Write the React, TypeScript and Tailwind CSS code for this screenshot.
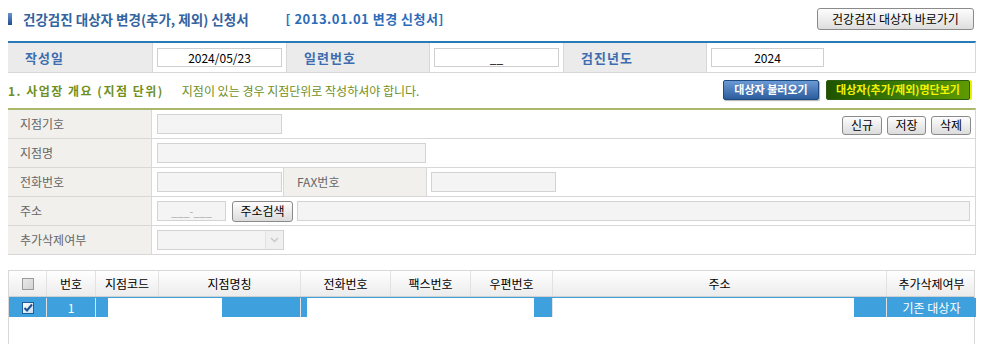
const font = { fontFamily: '"Noto Sans CJK KR", "Noto Sans", sans-serif' };

const GrayBtn = ({ children, className = "" }: { children: React.ReactNode; className?: string }) => (
  <button
    className={`h-[19px] rounded-[3px] border border-[#8a8a8a] bg-gradient-to-b from-[#fdfdfd] to-[#dcdcdc] px-[6px] text-[12px] leading-none text-black ${className}`}
  >
    {children}
  </button>
);

const TopLabel = ({ children }: { children: React.ReactNode }) => (
  <div className="flex items-center bg-[#ebebeb] pl-[17px] text-[13px] font-bold tracking-[1px] text-[#3e6cb0]">
    {children}
  </div>
);

const TopInput = ({ value, w }: { value: string; w: string }) => (
  <div className="flex items-center border-l border-[#d8d8d8] px-[4px]">
    <div className={`${w} flex h-[19px] items-center justify-center border border-[#cfcfcf] bg-white text-[12px] text-black`}>
      {value}
    </div>
  </div>
);

const FormLabel = ({ children }: { children: React.ReactNode }) => (
  <div className="flex w-[144px] shrink-0 items-center border-r border-[#d8d8d8] bg-[#f1f0ec] pl-[12px] text-[12px] text-[#666]">
    {children}
  </div>
);

const Field = ({ w, children }: { w: string; children?: React.ReactNode }) => (
  <div className={`${w} h-[20px] shrink-0 border border-[#d3d3d3] bg-[#f4f4f4] text-[12px] text-[#999]`}>{children}</div>
);

const cols = ["w-[38px]", "w-[49px]", "w-[63px]", "w-[142px]", "w-[90px]", "w-[80px]", "w-[82px]", "w-[334px]", "w-[89px]"];
const heads = ["", "번호", "지점코드", "지점명칭", "전화번호", "팩스번호", "우편번호", "주소", "추가삭제여부"];

export default function App() {
  return (
    <div className="h-[344px] w-[983px] overflow-hidden bg-white pl-[8px] pr-[7px] pt-[8px]" style={font}>
      {/* title */}
      <div className="flex h-[22px] items-center justify-between">
        <div className="flex items-center">
          <div className="h-[12px] w-[4px] bg-gradient-to-b from-[#6b93c9] to-[#1e4f91]" />
          <span className="ml-[11px] text-[13.5px] font-bold text-[#3563a0]">건강검진 대상자 변경(추가, 제외) 신청서</span>
          <span className="ml-[37px] text-[13px] font-bold tracking-[0.5px] text-[#2b6cb8]">[ 2013.01.01 변경 신청서]</span>
        </div>
        <button className="mr-[2px] h-[22px] w-[157px] rounded-[3px] border border-[#8a8a8a] bg-gradient-to-b from-[#fdfdfd] to-[#dedede] text-[12px] text-black">
          건강검진 대상자 바로가기
        </button>
      </div>

      {/* info row */}
      <div className="mt-[11px] grid h-[32px] w-[968px] grid-cols-[144px_134px_143px_134px_143px_1fr] border-b border-r border-[#d8d8d8] border-t-[2px] border-t-[#2a7ab8]">
        <TopLabel>작성일</TopLabel>
        <TopInput value="2024/05/23" w="w-[125px]" />
        <div className="flex border-l border-[#d8d8d8]"><div className="flex-1"><TopLabelFill>일련번호</TopLabelFill></div></div>
        <TopInput value="__" w="w-[125px]" />
        <div className="flex border-l border-[#d8d8d8]"><div className="flex-1"><TopLabelFill>검진년도</TopLabelFill></div></div>
        <TopInput value="2024" w="w-[113px]" />
      </div>

      {/* section header */}
      <div className="flex h-[35px] items-center justify-between">
        <div className="flex items-center pt-[1px]">
          <span className="text-[12px] font-bold tracking-[1.5px] text-[#6f8f1e]">1. 사업장 개요 (지점 단위)</span>
          <span className="ml-[18px] text-[12px] text-[#6f8f1e]">지점이 있는 경우 지점단위로 작성하셔야 합니다.</span>
        </div>
        <div className="flex items-center gap-[7px] pb-[2px] pr-[6px]">
          <button className="h-[20px] w-[96px] rounded-[2px] border border-[#1d4a80] bg-gradient-to-b from-[#6c9ad4] to-[#2b5c9c] text-[11px] font-bold text-white shadow-[1px_1px_1px_rgba(0,0,0,0.3)]">
            대상자 불러오기
          </button>
          <button className="h-[20px] w-[144px] rounded-[2px] border border-[#2d5c10] bg-gradient-to-r from-[#1f5200] via-[#3a7a08] to-[#5f9a00] text-[11px] font-bold text-[#f4f400] shadow-[2px_0_0_#e8f000]">
            대상자(추가/제외)명단보기
          </button>
        </div>
      </div>

      {/* form table */}
      <div className="w-[968px] border-b border-r border-[#d8d8d8] border-t-[2px] border-t-[#a9b86a]">
        <div className="flex h-[29px] border-b border-[#d8d8d8]">
          <FormLabel>지점기호</FormLabel>
          <div className="flex flex-1 items-center justify-between pl-[5px] pr-[4px]">
            <Field w="w-[125px]" />
            <div className="flex gap-[5px] pt-[2px]">
              <GrayBtn className="w-[40px]">신규</GrayBtn>
              <GrayBtn className="w-[39px]">저장</GrayBtn>
              <GrayBtn className="w-[40px]">삭제</GrayBtn>
            </div>
          </div>
        </div>
        <div className="flex h-[29px] border-b border-[#d8d8d8]">
          <FormLabel>지점명</FormLabel>
          <div className="flex flex-1 items-center pl-[5px]">
            <Field w="w-[269px]" />
          </div>
        </div>
        <div className="flex h-[29px] border-b border-[#d8d8d8]">
          <FormLabel>전화번호</FormLabel>
          <div className="flex w-[132px] items-center border-r border-[#d8d8d8] pl-[5px]">
            <Field w="w-[125px]" />
          </div>
          <div className="flex w-[143px] items-center border-r border-[#d8d8d8] bg-[#f1f0ec] pl-[13px] text-[12px] text-[#666]">FAX번호</div>
          <div className="flex flex-1 items-center pl-[4px]">
            <Field w="w-[125px]" />
          </div>
        </div>
        <div className="flex h-[29px] border-b border-[#d8d8d8]">
          <FormLabel>주소</FormLabel>
          <div className="flex flex-1 items-center pl-[5px] pr-[5px]">
            <Field w="w-[69px]">
              <div className="flex h-full items-center justify-center text-[11px] text-[#aaa]">___-___</div>
            </Field>
            <GrayBtn className="ml-[6px] h-[21px] w-[61px] px-0 text-[12px]">주소검색</GrayBtn>
            <div className="ml-[4px] h-[20px] flex-1 border border-[#d3d3d3] bg-[#f4f4f4]" />
          </div>
        </div>
        <div className="flex h-[28px]">
          <FormLabel>추가삭제여부</FormLabel>
          <div className="flex flex-1 items-center pl-[5px]">
            <div className="flex h-[20px] w-[127px] border border-[#d3d3d3] bg-[#f4f4f4]">
              <div className="flex-1" />
              <div className="flex w-[18px] items-center justify-center border-l border-[#e2e2e2] bg-[#f0f0f0]">
                <svg width="9" height="6" viewBox="0 0 9 6">
                  <path d="M1 1 L4.5 4.5 L8 1" stroke="#c8c8c8" strokeWidth="1.5" fill="none" />
                </svg>
              </div>
            </div>
          </div>
        </div>
      </div>

      {/* grid */}
      <div className="mt-[15px] h-[80px] w-[967px] border-l border-r border-t border-[#d8d8d8]">
        <div className="flex h-[26px] border-b border-[#d0d0d0] bg-gradient-to-b from-white to-[#ececec]">
          {heads.map((h, i) => (
            <div
              key={i}
              className={`${cols[i]} flex shrink-0 items-center justify-center text-[12px] text-black ${i < heads.length - 1 ? "border-r border-[#e2e2e2]" : ""}`}
            >
              {i === 0 ? (
                <div className="h-[12px] w-[12px] border border-[#9a9a9a] bg-gradient-to-br from-[#e8e8e8] to-[#d4d4d4]" />
              ) : (
                h
              )}
            </div>
          ))}
        </div>
        <div className="flex h-[20px] border-t border-[#3ea0dc]">
          <div className={`${cols[0]} flex shrink-0 items-center justify-center border-r border-[#e2e2e2] bg-[#3ea0dc]`}>
            <div className="flex h-[12px] w-[12px] items-center justify-center border border-[#1b5e9c] bg-gradient-to-br from-white to-[#c8dcee]">
              <svg width="10" height="10" viewBox="0 0 10 10">
                <path d="M1.5 5 L4 7.5 L9 1.5" stroke="#1b4f8c" strokeWidth="2" fill="none" />
              </svg>
            </div>
          </div>
          <div className={`${cols[1]} flex shrink-0 items-center justify-center border-r border-[#e2e2e2] bg-[#3ea0dc] text-[12px] text-white`}>1</div>
          <div className={`${cols[2]} flex shrink-0 bg-[#3ea0dc]`}>
            <div className="w-[12px]" />
            <div className="flex-1 bg-white" />
          </div>
          <div className={`${cols[3]} flex shrink-0 border-r border-[#e2e2e2] bg-[#3ea0dc]`}>
            <div className="w-[63px] bg-white" />
          </div>
          <div className={`${cols[4]} flex shrink-0 bg-[#3ea0dc]`}>
            <div className="w-[6px]" />
            <div className="flex-1 bg-white" />
          </div>
          <div className={`${cols[5]} flex shrink-0 bg-white`} />
          <div className={`${cols[6]} flex shrink-0 border-r border-[#e2e2e2] bg-[#3ea0dc]`}>
            <div className="w-[63px] bg-white" />
          </div>
          <div className={`${cols[7]} flex shrink-0 border-r border-[#e2e2e2] bg-[#3ea0dc]`}>
            <div className="w-[301px] bg-white" />
          </div>
          <div className={`${cols[8]} flex shrink-0 items-center justify-center bg-[#3ea0dc] text-[12px] text-white`}>기존 대상자</div>
        </div>
      </div>
    </div>
  );
}

function TopLabelFill({ children }: { children: React.ReactNode }) {
  return <div className="flex h-full items-center bg-[#ebebeb] pl-[17px] text-[13px] font-bold tracking-[1px] text-[#3e6cb0]">{children}</div>;
}
